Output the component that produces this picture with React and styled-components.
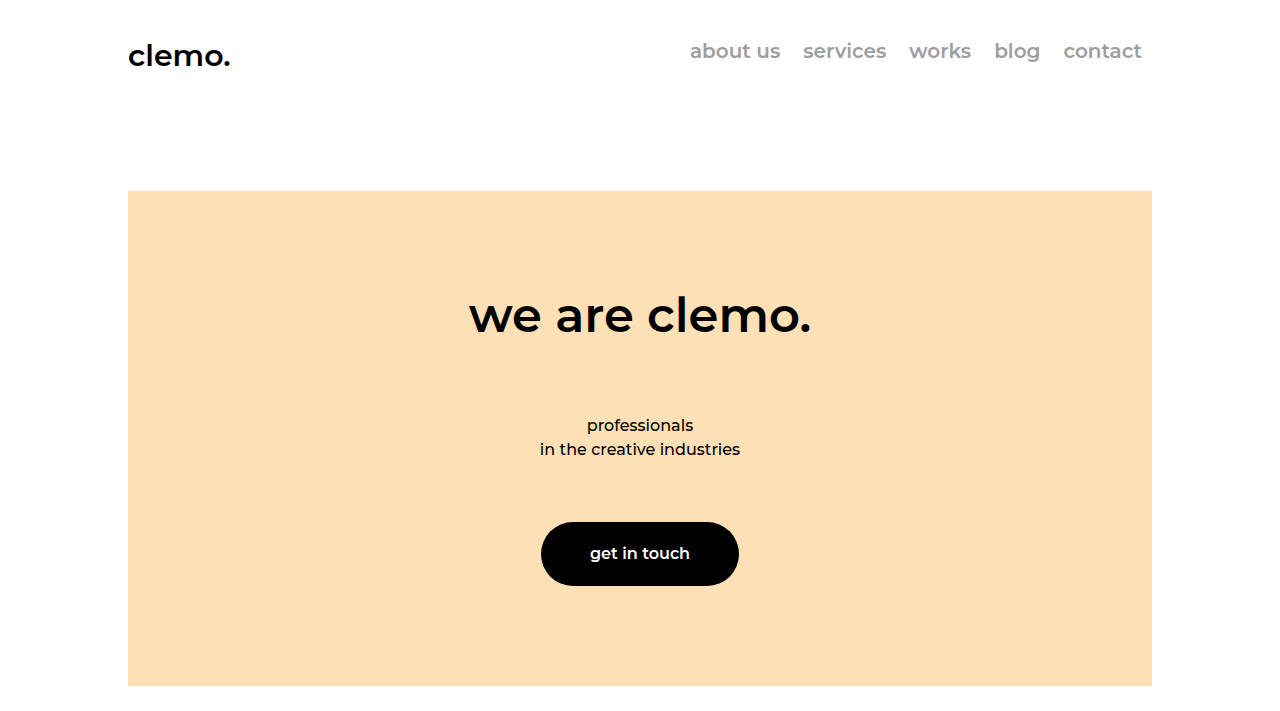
import React from "react";
import styled, { createGlobalStyle } from "styled-components";

const GlobalStyle = createGlobalStyle`
  *, *::before, *::after { box-sizing: border-box; }
  body {
    margin: 0;
    background: #ffffff;
    color: #000000;
    font-family: Montserrat, Inter, "Liberation Sans", sans-serif;
    font-size: 16px;
    line-height: 24px;
    font-weight: 500;
  }
`;

const Page = styled.div`
  width: 80%;
  margin: 0 auto;
  padding-bottom: 25px;
`;

const Header = styled.header`
  display: flex;
  justify-content: space-between;
  align-items: flex-start;
  padding: 32px 10px 0 0;
  margin-bottom: 111px;
`;

const Logo = styled.a`
  color: #000000;
  font-size: 30px;
  line-height: 48px;
  font-weight: 600;
  text-decoration: none;
`;

const Nav = styled.nav`
  display: flex;
  gap: 23px;
  padding-top: 3px;
`;

const NavLink = styled.a`
  color: #9e9e9e;
  font-size: 20px;
  line-height: 32px;
  font-weight: 600;
  text-decoration: none;
`;

const Hero = styled.main`
  display: flex;
  flex-direction: column;
  align-items: center;
  padding: 88px 24px 100px;
  background: #fee0b7;
  text-align: center;
`;

const Title = styled.h1`
  margin: 0 0 63px;
  font-size: 48px;
  line-height: 72px;
  font-weight: 600;
`;

const Tagline = styled.p`
  margin: 0 0 60px;
`;

const Button = styled.button`
  padding: 20px 49px;
  border: 0;
  border-radius: 32px;
  background: #000000;
  color: #ffffff;
  font: inherit;
  font-weight: 600;
  cursor: pointer;
`;

const links = ["about us", "services", "works", "blog", "contact"];

export default function App() {
  return (
    <>
      <GlobalStyle />
      <Page>
        <Header>
          <Logo href="#">clemo.</Logo>
          <Nav>
            {links.map((label) => (
              <NavLink key={label} href={"#" + label.replace(" ", "-")}>
                {label}
              </NavLink>
            ))}
          </Nav>
        </Header>
        <Hero>
          <Title>we are clemo.</Title>
          <Tagline>
            professionals
            <br />
            in the creative industries
          </Tagline>
          <Button type="button">get in touch</Button>
        </Hero>
      </Page>
    </>
  );
}
